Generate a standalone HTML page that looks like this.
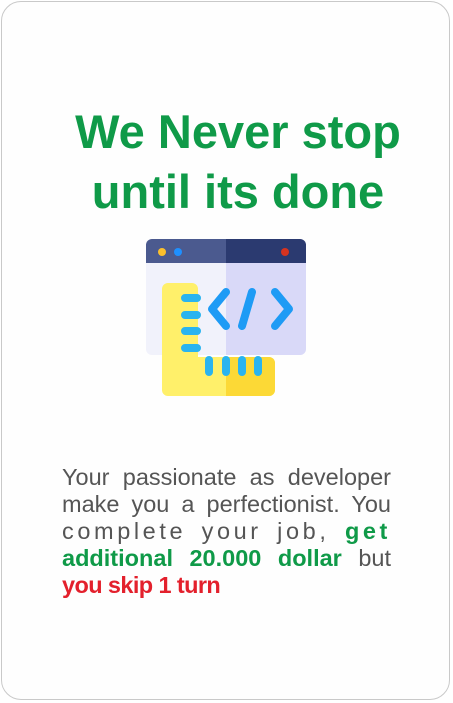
<!DOCTYPE html>
<html><head><style>
body{margin:0;width:453px;height:703px;background:#fff;font-family:"Liberation Sans",sans-serif;}
.card{position:absolute;left:1px;top:1px;width:449px;height:699px;border:1px solid #c9c9c9;border-radius:20px;box-sizing:border-box;background:#fefefe;}
.t{position:absolute;left:0;width:476px;text-align:center;color:#0f9a48;font-weight:bold;font-size:47px;line-height:60px;letter-spacing:0px}
.p{position:absolute;left:62px;width:329px;font-size:23.5px;color:#555;line-height:27px}
.p div{text-align:justify;text-align-last:justify;white-space:nowrap;height:27px}
.g{color:#0f9a48;font-weight:bold}.r{color:#e3202c;font-weight:bold}
</style></head><body>
<div class="card"></div>
<div class="t" style="top:102px">We Never stop</div>
<div class="t" style="top:162px">until its done</div>
<svg style="position:absolute;left:140px;top:230px" width="180" height="180" viewBox="0 0 180 180">
<rect x="6" y="9" width="160" height="116" rx="6" fill="#f1f2fb"/>
<path d="M86 9h74a6 6 0 0 1 6 6v104a6 6 0 0 1-6 6h-74z" fill="#d9d9f8"/>
<path d="M12 9h74v24H6V15a6 6 0 0 1 6-6z" fill="#4b5a8f"/>
<path d="M86 9h74a6 6 0 0 1 6 6v18H86z" fill="#2b3a70"/>
<circle cx="22" cy="22" r="4" fill="#fbc02d"/><circle cx="38" cy="22" r="4" fill="#1e90ff"/><circle cx="145" cy="22" r="4" fill="#d6331f"/>
<path d="M28 53h24a6 6 0 0 1 6 6v68h71a6 6 0 0 1 6 6v27a6 6 0 0 1-6 6H28a6 6 0 0 1-6-6V59a6 6 0 0 1 6-6z" fill="#fff06a"/>
<path d="M86 127h43a6 6 0 0 1 6 6v27a6 6 0 0 1-6 6H86z" fill="#fcd936"/>
<g stroke="#2ab4ef" stroke-width="8" stroke-linecap="round">
<path d="M45 68h12M45 85h12M45 101h12M45 118h12M69 130v12M86 130v12M102 130v12M118 130v12"/>
</g>
<g stroke="#1e9bf5" stroke-width="8" stroke-linecap="round" fill="none" stroke-linejoin="round">
<path d="M86 62l-14 17 14 17M135 62l14 17-14 17M112 62l-10 34"/>
</g>
</svg>
<div class="p" style="top:464px">
<div>Your passionate as developer</div>
<div>make you a perfectionist. You</div>
<div style="letter-spacing:3.6px">complete your job, <span class="g">get</span></div>
<div><span class="g">additional 20.000 dollar</span> but</div>
<div style="text-align-last:left;letter-spacing:-0.6px"><span class="r">you skip 1 turn</span></div>
</div>
</body></html>
